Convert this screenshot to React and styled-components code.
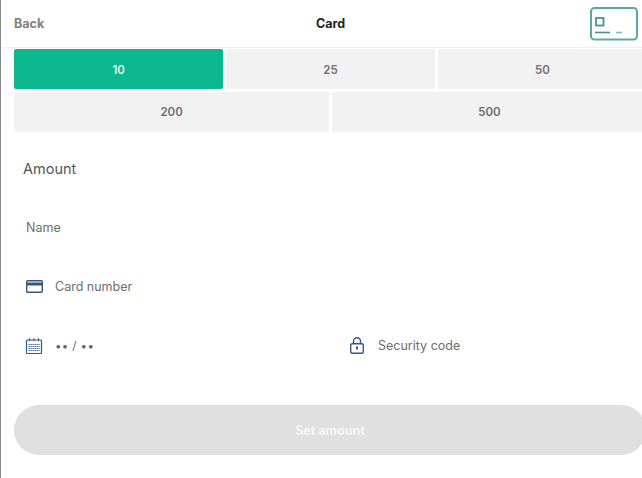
import React from "react"
import styled, { createGlobalStyle } from "styled-components"

const GlobalStyle = createGlobalStyle`
  html, body {
    margin: 0;
    padding: 0;
    background: #fff;
  }
  body {
    font-family: Inter, "Liberation Sans", sans-serif;
    overflow: hidden;
  }
`

const Page = styled.div`
  width: 642px;
  height: 478px;
  box-sizing: border-box;
  border-left: 1px solid #8a8a8a;
  overflow: hidden;
  display: flex;
  flex-direction: column;
`

const Header = styled.header`
  height: 48px;
  flex: none;
  box-sizing: border-box;
  padding: 0 4px 0 13px;
  display: grid;
  grid-template-columns: 302px auto 1fr;
  align-items: center;
  border-bottom: 1px solid #f1f1f1;
`

const Back = styled.span`
  font-size: 12.5px;
  font-weight: 700;
  color: #808080;
`

const Title = styled.span`
  font-size: 12.5px;
  font-weight: 700;
  line-height: 18px;
  padding-top: 1px;
  color: #222;
`

const HeaderIcon = styled.svg`
  justify-self: end;
  display: block;
`

const Tiles = styled.div`
  width: 633px;
  margin: 1px 0 0 13px;
  display: grid;
  grid-template-columns: repeat(6, 1fr);
  grid-auto-rows: 40px;
  gap: 2.5px;
`

const Tile = styled.div`
  grid-column: span ${(p) => p.$span};
  display: flex;
  align-items: center;
  justify-content: center;
  padding-top: 1px;
  box-sizing: border-box;
  border-radius: 2px;
  font-size: 11.5px;
  font-weight: 600;
  background: ${(p) => (p.$active ? "#0bb88f" : "#f2f2f2")};
  color: ${(p) => (p.$active ? "#e4f8f2" : "#6f6f6f")};
`

const AmountLabel = styled.div`
  margin: 27px 0 0 22px;
  font-size: 14.5px;
  line-height: 20px;
  color: #555;
`

const NameField = styled.div`
  margin: 39px 0 0 25px;
  font-size: 12.5px;
  line-height: 20px;
  color: #6e6e6e;
`

const Field = styled.div`
  display: flex;
  align-items: center;
  gap: ${(p) => p.$gap}px;
  font-size: 12.5px;
  line-height: 20px;
  color: #6e6e6e;
`

const CardRow = styled.div`
  margin: 39px 0 0 25px;
`

const SplitRow = styled.div`
  margin: 39px 0 0 24px;
  display: grid;
  grid-template-columns: 325px 1fr;
`

const Mask = styled.span`
  font-size: 11.5px;
  letter-spacing: 0.4px;
  color: #666;
`

const Submit = styled.div`
  width: 632px;
  height: 50px;
  margin: 49px 0 0 13px;
  flex: none;
  box-sizing: border-box;
  padding-top: 1px;
  border-radius: 25px;
  background: #e0e0e0;
  color: #f6f6f6;
  font-size: 12.5px;
  font-weight: 700;
  display: flex;
  align-items: center;
  justify-content: center;
`

const CardGlyph = () => (
  <svg width="17" height="13" viewBox="0 0 17 13" fill="none">
    <rect x="0.7" y="0.7" width="15.6" height="11.6" rx="1" stroke="#34597a" strokeWidth="1.4" />
    <rect x="1" y="2.5" width="15" height="3" fill="#34597a" />
  </svg>
)

const CalendarGlyph = () => (
  <svg width="18" height="18" viewBox="0 0 18 18" fill="none" stroke="#34597a">
    <rect x="1.5" y="3" width="15" height="13.5" rx="1" strokeWidth="1.2" />
    <path d="M4.5 1.2v3M9 1.2v3M13.5 1.2v3" strokeWidth="1.1" />
    <path d="M3.5 7.5h11M3.5 9.5h11M3.5 11.5h11M3.5 13.5h11" strokeWidth="1.1" strokeDasharray="1.3 0.7" />
  </svg>
)

const LockGlyph = () => (
  <svg width="14" height="17" viewBox="0 0 14 17" fill="none" stroke="#34597a">
    <rect x="0.7" y="6.7" width="12.6" height="9.6" rx="1.5" strokeWidth="1.4" />
    <path d="M3.5 6.5V4a3.5 3.3 0 0 1 7 0v2.5" strokeWidth="1.4" />
    <path d="M7 9.5v3" strokeWidth="2" />
  </svg>
)

const App = () => (
  <>
    <GlobalStyle />
    <Page>
      <Header>
        <Back>Back</Back>
        <Title>Card</Title>
        <HeaderIcon width="48" height="34" viewBox="0 0 48 34" fill="none">
          <rect x="1" y="1" width="46" height="31.5" rx="3.5" stroke="#5aa9a6" strokeWidth="2" />
          <rect x="6" y="11" width="7.5" height="7.5" stroke="#4d8f94" strokeWidth="1.8" />
          <path d="M5 25.5h15" stroke="#4d8f94" strokeWidth="1.6" />
          <path d="M26 25.5h6" stroke="#79bcb8" strokeWidth="1.6" />
        </HeaderIcon>
      </Header>
      <Tiles>
        <Tile $span={2} $active>10</Tile>
        <Tile $span={2}>25</Tile>
        <Tile $span={2}>50</Tile>
        <Tile $span={3}>200</Tile>
        <Tile $span={3}>500</Tile>
      </Tiles>
      <AmountLabel>Amount</AmountLabel>
      <NameField>Name</NameField>
      <CardRow>
        <Field $gap={12}>
          <CardGlyph />
          Card number
        </Field>
      </CardRow>
      <SplitRow>
        <Field $gap={12}>
          <CalendarGlyph />
          <Mask>•• / ••</Mask>
        </Field>
        <Field $gap={14}>
          <LockGlyph />
          Security code
        </Field>
      </SplitRow>
      <Submit>Set amount</Submit>
    </Page>
  </>
)

export default App
